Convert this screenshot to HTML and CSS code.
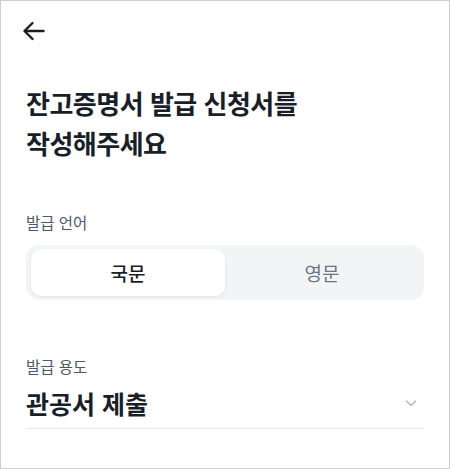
FILE: index.html
```html
<!DOCTYPE html>
<html lang="ko">
<head>
  <meta charset="UTF-8">
  <meta name="viewport" content="width=device-width, initial-scale=1">
  <title>잔고증명서 발급 신청</title>
  <link rel="stylesheet" href="styles.css">
</head>
<body>
  <div class="screen">
    <div class="top-bar">
      <button class="back-btn" aria-label="뒤로">
        <svg width="24" height="24" viewBox="0 0 24 24" fill="none" stroke="#191f28" stroke-width="2.4" stroke-linecap="round" stroke-linejoin="round">
          <path d="M21.5 12H3"/>
          <path d="M10.5 4L2.5 12l8 8"/>
        </svg>
      </button>
    </div>

    <h1 class="title">잔고증명서 발급 신청서를<br>작성해주세요</h1>

    <div class="field">
      <div class="label">발급 언어</div>
      <div class="segment">
        <button class="seg-item active">국문</button>
        <button class="seg-item">영문</button>
      </div>
    </div>

    <div class="field purpose">
      <div class="label">발급 용도</div>
      <div class="select">
        <span class="select-value">관공서 제출</span>
        <svg class="chevron" width="14" height="14" viewBox="0 0 14 14" fill="none" stroke="#b0b8c1" stroke-width="1.4" stroke-linecap="round" stroke-linejoin="round">
          <path d="M2.5 5l4.5 4.5L11.5 5"/>
        </svg>
      </div>
    </div>
  </div>
</body>
</html>
```

FILE: styles.css
```css
/* 기본 */
body {
  margin: 0;
  font-family: "Noto Sans CJK KR", "Noto Sans", sans-serif;
  color: #191f28;
  background: #fff;
}
.screen {
  box-sizing: border-box;
  width: 450px;
  height: 469px;
  border: 1px solid #cfcfcf;
  padding: 0 25px;
  overflow: hidden;
}
.top-bar {
  height: 60px;
  display: flex;
  align-items: center;
}
.back-btn {
  background: none;
  border: none;
  padding: 0;
  margin-left: -7px;
  width: 30px;
  height: 30px;
  display: flex;
  align-items: center;
  justify-content: center;
  cursor: pointer;
}
.title {
  margin: 22px 0 0;
  font-size: 26px;
  line-height: 40px;
  font-weight: 700;
  letter-spacing: -0.5px;
}

/* 입력 영역 */
.field {
  margin-top: 48px;
}
.label {
  font-size: 15.5px;
  line-height: 22px;
  color: #4e5968;
}
.segment {
  margin-top: 12px;
  display: flex;
  padding: 4px 5px;
  background: #f2f4f6;
  border-radius: 13px;
}
.seg-item {
  flex: 1;
  height: 47px;
  border: none;
  background: none;
  border-radius: 10px;
  font-family: inherit;
  font-size: 19px;
  color: #6b7684;
  cursor: pointer;
}
.seg-item.active {
  background: #fff;
  color: #191f28;
  font-weight: 500;
  box-shadow: 0 1px 3px rgba(0, 0, 0, 0.08);
}
.purpose {
  margin-top: 55px;
}
.select {
  margin-top: 8px;
  display: flex;
  align-items: center;
  justify-content: space-between;
  padding-bottom: 7px;
  border-bottom: 1px solid #e5e8eb;
}
.select-value {
  font-size: 25px;
  line-height: 36px;
  font-weight: 700;
}
.chevron {
  margin-right: 6px;
}
```
